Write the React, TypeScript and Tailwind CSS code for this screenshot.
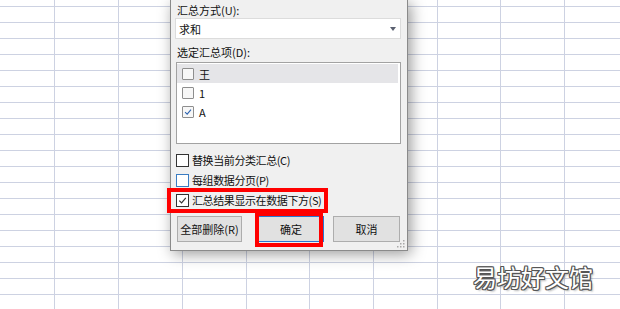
import React from 'react';

const colWidths = [55, 64, 64, 64, 63, 64, 64, 63, 64, 64];
const rowCount = 21;

const font = { fontFamily: '"Noto Sans CJK SC", "Microsoft YaHei", "Liberation Sans", sans-serif' };

function Check({ color }: { color: string }) {
  return (
    <svg viewBox="0 0 12 12" className="w-full h-full" fill="none" stroke={color} strokeWidth={1.3}>
      <polyline points="2.5,6.2 5,8.6 9.6,3.2" />
    </svg>
  );
}

function ListItem({ label, checked, selected }: { label: string; checked?: boolean; selected?: boolean }) {
  return (
    <div className={`flex items-center h-[19px] pl-[5px] ${selected ? 'bg-[#e5e5e8] mr-[2px]' : ''}`}>
      <div className="w-[12px] h-[12px] border border-[#8e8e8e] bg-[#f7f7f7] rounded-[1px]">
        {checked && <Check color="#2e64b0" />}
      </div>
      <span className="ml-[5px] text-[11px] leading-[14px] text-[#111]">{label}</span>
    </div>
  );
}

function OptionRow({ label, checked, blue }: { label: string; checked?: boolean; blue?: boolean }) {
  return (
    <div className="flex items-center h-[20px] ml-[1px]">
      <div className={`w-[13px] h-[13px] border bg-white ${blue ? 'border-[#3a7cc2]' : 'border-[#333]'}`}>
        {checked && <Check color="#333" />}
      </div>
      <span className="ml-[3px] text-[11px] leading-[14px] tracking-[-0.4px] text-[#111]">{label}</span>
    </div>
  );
}

export default function App() {
  return (
    <div className="relative w-[620px] h-[309px] overflow-hidden bg-white" style={font}>
      {/* sheet grid */}
      <div className="-mt-[9px]">
        {Array.from({ length: rowCount }).map((_, r) => (
          <div key={r} className="flex h-[16px]">
            {colWidths.map((w, c) => (
              <div
                key={c}
                className="shrink-0 h-[16px] border-r border-b border-[#cdd2e2]"
                style={{ width: w }}
              />
            ))}
          </div>
        ))}
      </div>

      {/* dialog */}
      <div className="absolute left-[170px] top-0 w-[238px] h-[251px] bg-[#f0f0f0] border-x border-b border-[#8a8a8a] shadow-[3px_3px_14px_rgba(0,0,0,0.4)] pl-[4px]">
        <div className="pt-[3px] pl-[2px] text-[11px] leading-[14px] text-[#111]">汇总方式(U):</div>
        <div className="mt-[1px] w-[226px] h-[21px] bg-white border border-[#dcdcdc] flex items-center justify-between pl-[3px] pr-[4px]">
          <span className="text-[11px] leading-[14px] text-[#111]">求和</span>
          <svg viewBox="0 0 6 4" className="w-[6px] h-[4px]">
            <polygon points="0,0 6,0 3,4" fill="#5a6070" />
          </svg>
        </div>
        <div className="mt-[6px] pl-[2px] text-[11px] leading-[14px] text-[#111]">选定汇总项(D):</div>
        <div className="mt-[3px] ml-[1px] w-[225px] h-[82px] bg-white border border-[#a2a2a2] pt-[1px]">
          <ListItem label="王" selected />
          <ListItem label="1" />
          <ListItem label="A" checked />
        </div>
        <div className="mt-[6px]">
          <OptionRow label="替换当前分类汇总(C)" />
          <OptionRow label="每组数据分页(P)" blue />
          <OptionRow label="汇总结果显示在数据下方(S)" checked />
        </div>
        <div className="flex mt-[6px]">
          <button className="ml-[2px] w-[65px] h-[26px] bg-[#e1e1e1] border border-[#adadad] text-[11px] text-[#111]">
            全部删除(R)
          </button>
          <button className="ml-[16px] w-[66px] h-[26px] bg-[#e1e1e1] border border-[#2b78d0] text-[11px] text-[#111]">
            确定
          </button>
          <button className="ml-[9px] w-[67px] h-[26px] bg-[#e1e1e1] border border-[#adadad] text-[11px] text-[#111]">
            取消
          </button>
        </div>
        <svg viewBox="0 0 8 8" className="absolute right-[2px] bottom-[2px] w-[8px] h-[8px]">
          <rect x="6" y="0" width="1.5" height="1.5" fill="#a8a8a8" />
          <rect x="3" y="3" width="1.5" height="1.5" fill="#a8a8a8" />
          <rect x="6" y="3" width="1.5" height="1.5" fill="#a8a8a8" />
          <rect x="0" y="6" width="1.5" height="1.5" fill="#a8a8a8" />
          <rect x="3" y="6" width="1.5" height="1.5" fill="#a8a8a8" />
          <rect x="6" y="6" width="1.5" height="1.5" fill="#a8a8a8" />
        </svg>
      </div>

      {/* red highlight boxes */}
      <div className="absolute left-[167px] top-[188px] w-[161px] h-[25px] border-[4px] border-[#ff0000]" />
      <div className="absolute left-[255px] top-[212px] w-[68px] h-[35px] border-[4px] border-[#ff0000]" />

      {/* watermark */}
      <div className="absolute left-[473px] top-[263px] text-[24px] leading-[28px] text-white [text-shadow:1px_1px_0_#555,-1px_-1px_0_#555,1px_-1px_0_#555,-1px_1px_0_#555,0_1px_0_#555,0_-1px_0_#555,1px_0_0_#555,-1px_0_0_#555,2px_2px_2px_rgba(0,0,0,0.3)]">
        易坊好文馆
      </div>
    </div>
  );
}
